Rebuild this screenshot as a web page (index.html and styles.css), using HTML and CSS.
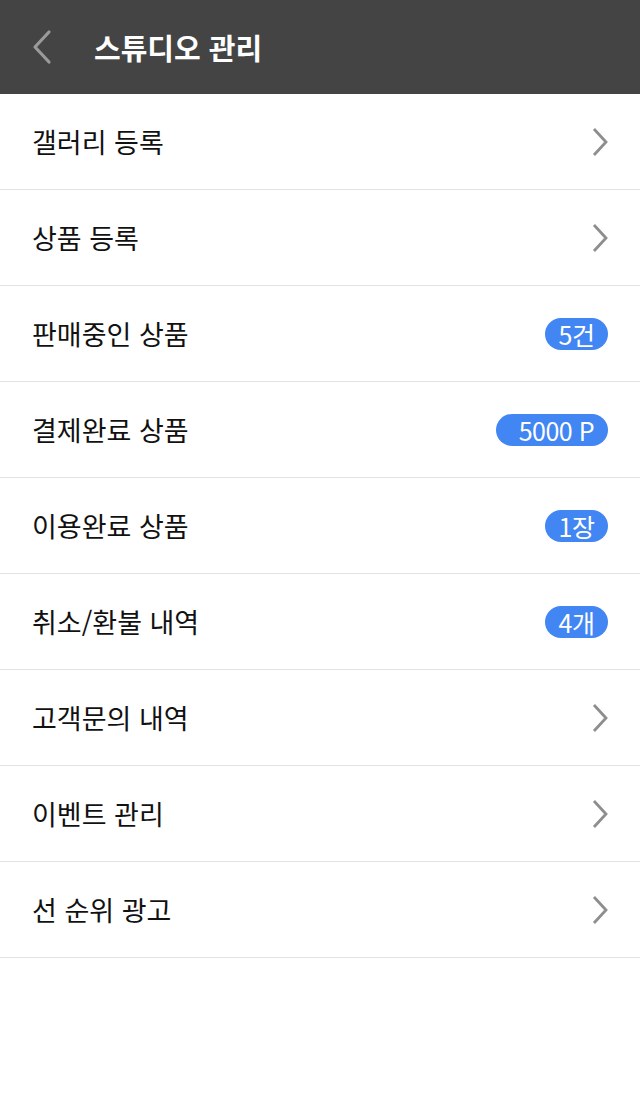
FILE: index.html
```html
<!DOCTYPE html>
<html lang="ko">
<head>
<meta charset="utf-8">
<link rel="stylesheet" href="styles.css">
</head>
<body>
<header class="top">
  <svg class="back" width="22" height="36" viewBox="0 0 22 36"><path d="M18 3 L4 18 L18 33" fill="none" stroke="#9a9a9a" stroke-width="3.2" stroke-linecap="round" stroke-linejoin="round"/></svg>
  <h1 class="title">스튜디오 관리</h1>
</header>
<ul class="menu">
  <li class="row"><span class="label">갤러리 등록</span><svg class="chev" width="18" height="30" viewBox="0 0 18 30"><path d="M3 2 L15 15 L3 28" fill="none" stroke="#8e8e8e" stroke-width="2.8"/></svg></li>
  <li class="row"><span class="label">상품 등록</span><svg class="chev" width="18" height="30" viewBox="0 0 18 30"><path d="M3 2 L15 15 L3 28" fill="none" stroke="#8e8e8e" stroke-width="2.8"/></svg></li>
  <li class="row"><span class="label">판매중인 상품</span><span class="badge">5건</span></li>
  <li class="row"><span class="label">결제완료 상품</span><span class="badge wide">5000 P</span></li>
  <li class="row"><span class="label">이용완료 상품</span><span class="badge">1장</span></li>
  <li class="row"><span class="label">취소/환불 내역</span><span class="badge">4개</span></li>
  <li class="row"><span class="label">고객문의 내역</span><svg class="chev" width="18" height="30" viewBox="0 0 18 30"><path d="M3 2 L15 15 L3 28" fill="none" stroke="#8e8e8e" stroke-width="2.8"/></svg></li>
  <li class="row"><span class="label">이벤트 관리</span><svg class="chev" width="18" height="30" viewBox="0 0 18 30"><path d="M3 2 L15 15 L3 28" fill="none" stroke="#8e8e8e" stroke-width="2.8"/></svg></li>
  <li class="row"><span class="label">선 순위 광고</span><svg class="chev" width="18" height="30" viewBox="0 0 18 30"><path d="M3 2 L15 15 L3 28" fill="none" stroke="#8e8e8e" stroke-width="2.8"/></svg></li>
</ul>
</body>
</html>
```
FILE: styles.css
```css
* { box-sizing: border-box; }
html, body { margin: 0; padding: 0; background: #fff; }
body { font-family: "Noto Sans CJK KR", "Noto Sans", sans-serif; color: #111; }
.top {
  height: 94px;
  background: #444444;
  display: flex;
  align-items: center;
  padding-left: 31px;
}
.back { display: block; }
.title {
  margin: 0 0 0 41px;
  color: #fff;
  font-size: 29px;
  font-weight: 700;
  letter-spacing: 0;
}
.menu { list-style: none; margin: 0; padding: 0; }
.row {
  height: 96px;
  border-bottom: 1px solid #e2e2e2;
  display: flex;
  align-items: center;
  justify-content: space-between;
  padding: 0 32px 0 32px;
}
.label { font-size: 27px; letter-spacing: 0; color: #111; }
.chev { display: block; margin-right: -1px; }
.badge {
  background: #4286f4;
  color: #fff;
  font-size: 25px;
  height: 32px;
  line-height: 32px;
  border-radius: 16px;
  padding: 0 13px;
  min-width: 63px;
  text-align: center;
  letter-spacing: -0.5px;
}
.badge.wide { padding: 0 14px 0 23px; }
```
